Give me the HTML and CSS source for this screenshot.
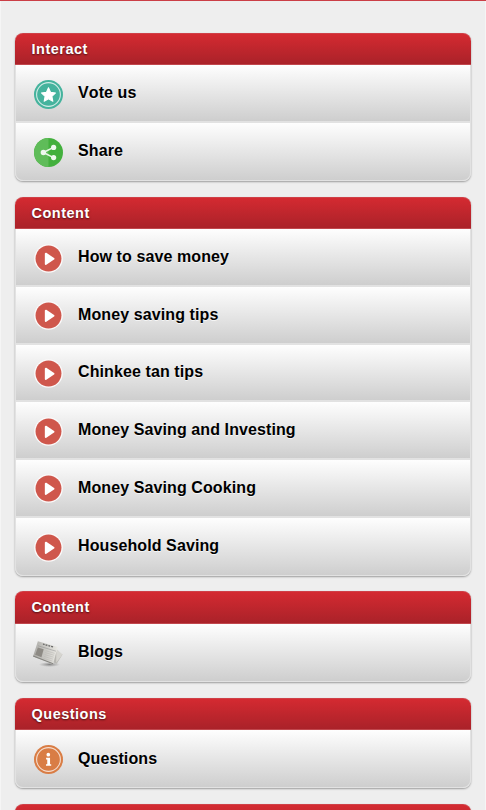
FILE: index.html
```html
<!DOCTYPE html>
<html lang="en">
    <head>
        <meta charset="UTF-8" />
        <meta name="viewport" content="width=device-width, initial-scale=1.0" />
        <title>Money Saving</title>
        <link rel="stylesheet" href="styles.css">
    </head>
    <body>
        <svg class="defs" width="0" height="0">
            <defs>
                <linearGradient id="paper" x1="0" y1="0" x2="1" y2="0">
                    <stop offset="0" stop-color="#aaa9a5" />
                    <stop offset="1" stop-color="#e9e8e3" />
                </linearGradient>
                <radialGradient id="shade">
                    <stop offset="0" stop-color="#555" stop-opacity=".65" />
                    <stop offset="1" stop-color="#777" stop-opacity="0" />
                </radialGradient>
            </defs>
            <symbol id="play" viewBox="0 0 30 30">
                <circle cx="15" cy="15" r="14.8" fill="#fbfafa" />
                <circle cx="15" cy="15" r="13.4" fill="#cf574c" />
                <path d="M12.2 10v10.6l8-5.3z" fill="#fff" stroke="#fff" stroke-width="2" stroke-linejoin="round" />
            </symbol>
        </svg>

        <div class="page">
            <ul class="group">
                <li class="hd">Interact</li>
                <li class="item">
                    <svg class="icon" viewBox="0 0 30 30">
                        <circle cx="15" cy="15" r="15" fill="#45b39d" />
                        <circle cx="15" cy="15" r="12.3" fill="none" stroke="#d3ece7" stroke-width="1.1" />
                        <path d="M15 8.1l2.2 4.7 5.1.6-3.8 3.5 1 5.1-4.5-2.5-4.5 2.5 1-5.1-3.8-3.5 5.1-.6z" fill="#fff" stroke="#fff" stroke-width="1.1" stroke-linejoin="round" />
                    </svg>
                    <span>Vote us</span>
                </li>
                <li class="item">
                    <svg class="icon" viewBox="0 0 30 30">
                        <circle cx="15" cy="15" r="15" fill="#43b03d" />
                        <path d="M15 0a15 15 0 0 0 0 30z" fill="#5fbc59" />
                        <path d="M20.2 9.7L9.7 15l10.5 5.3" fill="none" stroke="#e9f5e8" stroke-width="1.7" />
                        <circle cx="9.7" cy="15" r="2.8" fill="#eef8ee" />
                        <circle cx="20.3" cy="9.7" r="2.7" fill="#eef8ee" />
                        <circle cx="20.3" cy="20.3" r="2.7" fill="#eef8ee" />
                    </svg>
                    <span>Share</span>
                </li>
            </ul>

            <ul class="group">
                <li class="hd">Content</li>
                <li class="item"><svg class="icon"><use href="#play" /></svg><span>How to save money</span></li>
                <li class="item"><svg class="icon"><use href="#play" /></svg><span>Money saving tips</span></li>
                <li class="item"><svg class="icon"><use href="#play" /></svg><span>Chinkee tan tips</span></li>
                <li class="item"><svg class="icon"><use href="#play" /></svg><span>Money Saving and Investing</span></li>
                <li class="item"><svg class="icon"><use href="#play" /></svg><span>Money Saving Cooking</span></li>
                <li class="item"><svg class="icon"><use href="#play" /></svg><span>Household Saving</span></li>
            </ul>

            <ul class="group">
                <li class="hd">Content</li>
                <li class="item">
                    <svg class="icon" viewBox="0 0 30 30">
                        <ellipse cx="16" cy="26.4" rx="11" ry="2.6" fill="url(#shade)" />
                        <path d="M8 6l21.5 10-6 9.5L4 18z" fill="#b8b7b2" />
                        <path d="M23 10l6.5 6-6.5 8.5z" fill="#d6d5d0" />
                        <path d="M4 2.2l20.5 6.1-4.8 17.7L-1 18z" fill="url(#paper)" />
                        <path d="M-1 18l20.7 8 .2-1L-.6 17z" fill="#84837f" />
                        <path d="M4 8.8l6 1.9-2.3 8.1-6.5-2.5z" fill="#8d8a84" />
                        <path d="M9.3 5.2l1.7.5m1 .3l1.8.5m1.1.3l1.8.5m1 .3l2 .6" stroke="#666" stroke-width="1.3" />
                        <path d="M4.2 7l18.5 5.6" stroke="#888" stroke-width=".5" />
                        <path d="M12 12.1l9.3 2.7M11.5 14.1l9.3 2.7M11 16.1l9.2 2.7M10.5 18.1l9 2.7M10 20.1l9 2.7" stroke="#b5b4af" stroke-width=".5" />
                    </svg>
                    <span>Blogs</span>
                </li>
            </ul>

            <ul class="group">
                <li class="hd">Questions</li>
                <li class="item">
                    <svg class="icon" viewBox="0 0 30 30">
                        <circle cx="15" cy="15" r="15" fill="#d97d45" />
                        <circle cx="15" cy="15" r="12.3" fill="none" stroke="#f5ded0" stroke-width="1.1" />
                        <circle cx="14.8" cy="10" r="1.9" fill="#fff" />
                        <path d="M12.5 13.2h4.1v6.6h1.2v1.7h-5.4v-1.7h1.3v-4.9h-1.2z" fill="#fff" />
                    </svg>
                    <span>Questions</span>
                </li>
            </ul>

            <ul class="group">
                <li class="hd"></li>
            </ul>
        </div>
    </body>
</html>
```
FILE: styles.css
```css
* {
    padding: 0;
    margin: 0;
    box-sizing: border-box;
}

body {
    height: 810px;
    overflow: hidden;
    background: #eee;
    font-family: "Liberation Sans", Arial, sans-serif;
    font-weight: bold;
    font-kerning: none;
}

.defs {
    display: block;
}

.page {
    height: 810px;
    padding: 31.6px 15px 0;
    overflow: hidden;
    border-top: 1px solid #cb3e46;
    box-shadow: inset 1px 0 #f5f5f5, inset -1px 0 #f5f5f5;
}

.group {
    list-style: none;
    margin-bottom: 15.9px;
    border-radius: 8px;
    box-shadow: 0 1px 2px rgba(0, 0, 0, .35);
}

.hd {
    height: 32.6px;
    padding-left: 16.5px;
    border-top: 1px solid #cf4047;
    border-bottom: 1px solid #c1474d;
    border-radius: 8px 8px 0 0;
    background: linear-gradient(#d42a31, #aa2229);
    color: #fff;
    font-size: 14.5px;
    line-height: 31px;
    letter-spacing: .5px;
    text-shadow: 0 1px 2px rgba(0, 0, 0, .6);
}

.item {
    display: flex;
    align-items: center;
    height: 57.74px;
    padding-left: 18px;
    border: solid #e2e2e2;
    border-width: 0 1px 2px;
    background: linear-gradient(#fefefe, #cecece);
    color: #000;
    font-size: 16px;
    letter-spacing: .1px;
    text-shadow: 0 1px 0 rgba(255, 255, 255, .7);
}

.item:last-child {
    border-bottom-width: 1px;
    border-radius: 0 0 8px 8px;
}

.icon {
    width: 29px;
    height: 29px;
    margin-top: 2px;
    overflow: visible;
}

.item span {
    margin-left: 15px;
}
```
